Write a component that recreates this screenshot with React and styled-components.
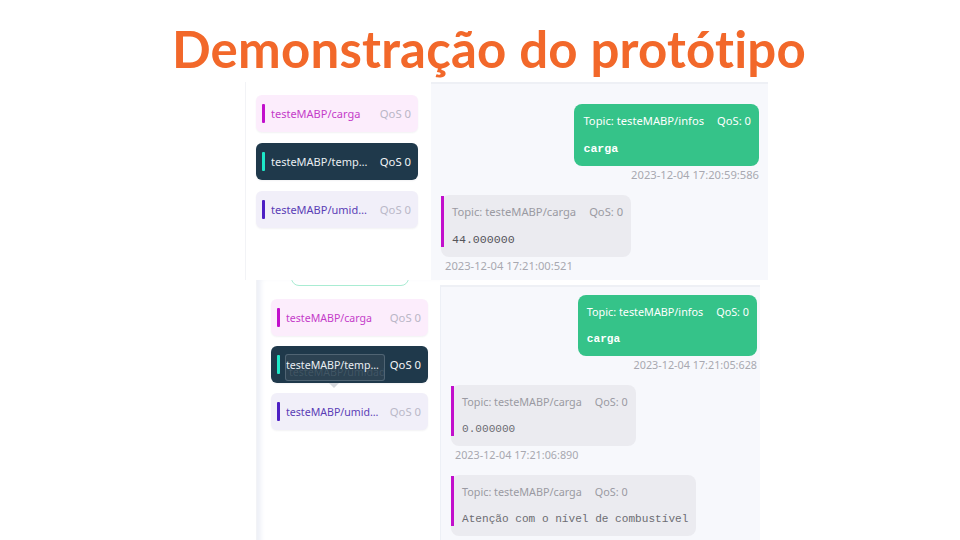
import styled, { createGlobalStyle } from "styled-components";

const GlobalStyle = createGlobalStyle`
  html, body {
    margin: 0;
    padding: 0;
    background: #ffffff;
  }
  body {
    width: 960px;
    height: 540px;
    overflow: hidden;
    font-family: "Noto Sans", "Open Sans", sans-serif;
  }
`;

const Slide = styled.div`
  width: 960px;
  height: 540px;
  display: flex;
  flex-direction: column;
  overflow: hidden;
`;

const Title = styled.h1`
  margin: 0;
  height: 82px;
  padding: 14px 0 0 18px;
  box-sizing: border-box;
  display: flex;
  align-items: center;
  justify-content: center;
  font-family: "Lato", sans-serif;
  font-weight: 700;
  font-size: 51px;
  color: #f2682a;
  letter-spacing: 0.2px;
`;

const Shot = styled.div`
  display: grid;
  grid-template-columns: ${(p) => p.$side}px 1fr;
  margin-left: ${(p) => p.$left}px;
  width: ${(p) => p.$width}px;
  height: ${(p) => p.$height}px;
  overflow: hidden;
  position: relative;
  z-index: ${(p) => p.$z || 0};
  background: #ffffff;
`;

const Sidebar = styled.div`
  display: flex;
  flex-direction: column;
  gap: ${(p) => p.$gap}px;
  padding: ${(p) => p.$pad};
  background: #ffffff;
  border-left: 1px solid #f2f3f6;
  box-shadow: ${(p) => (p.$shadow ? "inset 6px 0 5px -2px #eef0f7" : "none")};
`;

const SearchEdge = styled.div`
  width: 116px;
  height: 30px;
  margin: -26px 0 3px 20px;
  border: 1.5px solid #a9ecd3;
  border-radius: 8px;
  flex-shrink: 0;
`;

const themes = {
  pink: { bg: "#fcedfc", bar: "#c20fcc", text: "#c43cc9", qos: "#b9b6c6" },
  dark: { bg: "#1f394b", bar: "#1de8c8", text: "#e9eef2", qos: "#f2f5f7" },
  violet: { bg: "#f1eff9", bar: "#4d1fc4", text: "#5a3db6", qos: "#bab8c8" },
};

const Topic = styled.div`
  position: relative;
  display: flex;
  align-items: center;
  gap: 9px;
  height: 37px;
  flex-shrink: 0;
  padding: 0 7px 0 6px;
  border-radius: 6px;
  background: ${(p) => themes[p.$kind].bg};
  box-shadow: 0 1px 2px rgba(30, 40, 60, 0.06);
  font-size: ${(p) => (p.$small ? 10.6 : 11)}px;
`;

const Bar = styled.span`
  width: 3px;
  height: 19px;
  border-radius: 1px;
  margin-right: -3px;
  flex-shrink: 0;
  background: ${(p) => themes[p.$kind].bar};
`;

const TopicName = styled.span`
  position: relative;
  z-index: 1;
  flex: 1;
  min-width: 0;
  white-space: nowrap;
  overflow: hidden;
  text-overflow: ellipsis;
  color: ${(p) => themes[p.$kind].text};
`;

const Qos = styled.span`
  flex-shrink: 0;
  font-size: 11.3px;
  color: ${(p) => themes[p.$kind].qos};
`;

const Tooltip = styled.div`
  position: absolute;
  left: 14px;
  top: 8px;
  width: 100px;
  height: 27px;
  box-sizing: border-box;
  border: 1px solid rgba(150, 165, 178, 0.35);
  border-radius: 3px;
  background: rgba(70, 84, 96, 0.35);
  color: rgba(220, 228, 234, 0.13);
  font-size: 10.6px;
  padding: 10px 0 0 3px;
  white-space: nowrap;
  overflow: hidden;
`;

const TooltipArrow = styled.span`
  position: absolute;
  left: 58px;
  top: 37px;
  width: 0;
  height: 0;
  border-left: 5px solid transparent;
  border-right: 5px solid transparent;
  border-top: 5px solid #d4d7dc;
`;

const ChatPane = styled.div`
  display: flex;
  flex-direction: column;
  margin-top: ${(p) => p.$top || 0}px;
  padding: ${(p) => p.$pad};
  background: #f7f8fc;
  border-top: 2px solid #eef0f5;
  border-left: ${(p) => (p.$edge ? "1px solid #edf0f6" : "none")};
`;

const Message = styled.div`
  display: flex;
  flex-direction: column;
  align-items: ${(p) => (p.$out ? "flex-end" : "flex-start")};
  margin-bottom: 13px;
`;

const Bubble = styled.div`
  position: relative;
  display: flex;
  flex-direction: column;
  gap: ${(p) => (p.$small ? 11 : 12)}px;
  padding: 9px 8px 9px ${(p) => (p.$out ? 9 : 11)}px;
  border-radius: 8px;
  background: ${(p) => (p.$out ? "#35c389" : "#ebebf0")};
  color: ${(p) => (p.$out ? "#ffffff" : "#9a9aa2")};
  font-size: ${(p) => (p.$small ? 10.8 : 11.2)}px;
  line-height: 16px;

  ${(p) =>
    !p.$out &&
    `
    &::before {
      content: "";
      position: absolute;
      left: 0;
      top: 1px;
      bottom: 10px;
      width: 3px;
      background: #c20fcc;
    }
  `}
`;

const BubbleHead = styled.div`
  display: flex;
  gap: 13px;
  white-space: nowrap;
`;

const Payload = styled.div`
  font-family: "Liberation Mono", "DejaVu Sans Mono", monospace;
  font-size: ${(p) => (p.$small ? 11.1 : 11.6)}px;
  font-weight: ${(p) => (p.$out ? 700 : 400)};
  color: ${(p) => (p.$out ? "#ffffff" : p.$tone || "#6d6d73")};
  white-space: nowrap;
`;

const Stamp = styled.div`
  margin-top: 2px;
  padding-left: ${(p) => (p.$out ? 0 : 4)}px;
  font-size: ${(p) => (p.$small ? 10.8 : 11.2)}px;
  line-height: 14px;
  color: #a8a8b0;
  white-space: nowrap;
`;

function TopicItem({ kind, name, tooltip, small }) {
  return (
    <Topic $kind={kind} $small={small}>
      <Bar $kind={kind} />
      <TopicName $kind={kind}>{name}</TopicName>
      <Qos $kind={kind}>QoS 0</Qos>
      {tooltip && (
        <>
          <Tooltip>{tooltip}</Tooltip>
          <TooltipArrow />
        </>
      )}
    </Topic>
  );
}

function ChatMessage({ out, topic, payload, time, tone, small }) {
  return (
    <Message $out={out}>
      <Bubble $out={out} $small={small}>
        <BubbleHead>
          <span>Topic: {topic}</span>
          <span>QoS: 0</span>
        </BubbleHead>
        <Payload $out={out} $tone={tone} $small={small}>
          {payload}
        </Payload>
      </Bubble>
      <Stamp $out={out} $small={small}>
        {time}
      </Stamp>
    </Message>
  );
}

const topics = [
  { kind: "pink", name: "testeMABP/carga" },
  { kind: "dark", name: "testeMABP/temperatura" },
  { kind: "violet", name: "testeMABP/umidade" },
];

export default function App() {
  return (
    <Slide>
      <GlobalStyle />
      <Title>Demonstração do protótipo</Title>

      <Shot $left={245} $width={523} $height={198} $side={186} $z={2}>
        <Sidebar $pad="13px 13px 0 10px" $gap={11}>
          {topics.map((t) => (
            <TopicItem key={t.name} kind={t.kind} name={t.name} />
          ))}
        </Sidebar>
        <ChatPane $pad="20px 9px 0 10px">
          <ChatMessage
            out
            topic="testeMABP/infos"
            payload="carga"
            time="2023-12-04 17:20:59:586"
          />
          <ChatMessage
            topic="testeMABP/carga"
            payload="44.000000"
            time="2023-12-04 17:21:00:521"
            tone="#55555b"
          />
        </ChatPane>
      </Shot>

      <Shot $left={256} $width={504} $height={260} $side={184} $z={1}>
        <Sidebar $pad="0 12px 0 14px" $gap={10} $shadow>
          <SearchEdge />
          {topics.map((t) => (
            <TopicItem
              small
              key={t.name}
              kind={t.kind}
              name={t.name}
              tooltip={t.kind === "dark" ? "testeMABP/umidade" : null}
            />
          ))}
        </Sidebar>
        <ChatPane $pad="8px 3px 0 10px" $top={5} $edge>
          <ChatMessage
            small
            out
            topic="testeMABP/infos"
            payload="carga"
            time="2023-12-04 17:21:05:628"
          />
          <ChatMessage
            small
            topic="testeMABP/carga"
            payload="0.000000"
            time="2023-12-04 17:21:06:890"
          />
          <ChatMessage
            small
            topic="testeMABP/carga"
            payload="Atenção com o nível de combustível"
            time="2023-12-04 17:21:06:991"
          />
        </ChatPane>
      </Shot>
    </Slide>
  );
}
